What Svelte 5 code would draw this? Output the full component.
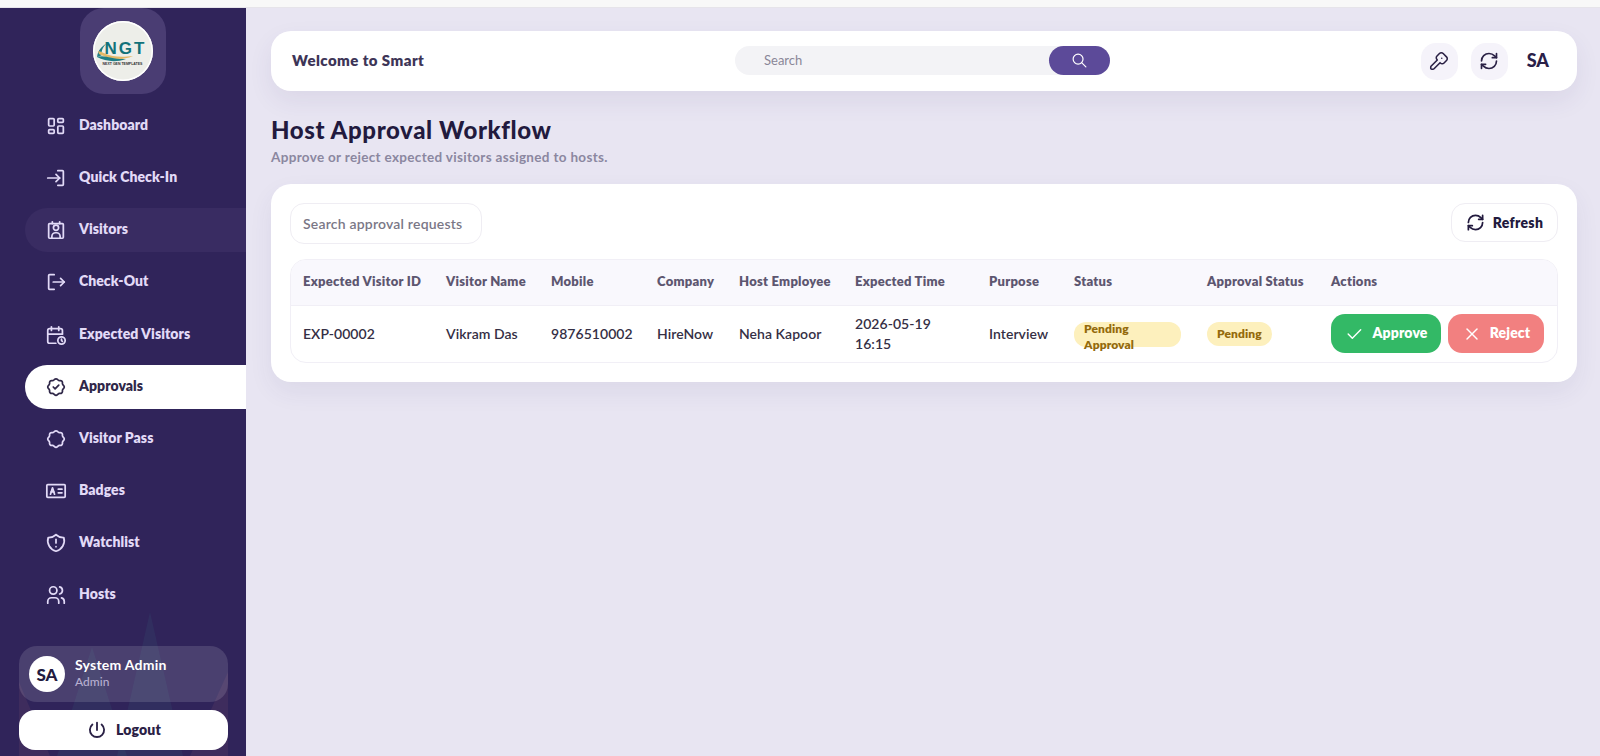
<script>
  const icons = {
    dashboard: ['M5 4h4a1 1 0 0 1 1 1v6a1 1 0 0 1 -1 1h-4a1 1 0 0 1 -1 -1v-6a1 1 0 0 1 1 -1', 'M5 16h4a1 1 0 0 1 1 1v2a1 1 0 0 1 -1 1h-4a1 1 0 0 1 -1 -1v-2a1 1 0 0 1 1 -1', 'M15 12h4a1 1 0 0 1 1 1v6a1 1 0 0 1 -1 1h-4a1 1 0 0 1 -1 -1v-6a1 1 0 0 1 1 -1', 'M15 4h4a1 1 0 0 1 1 1v2a1 1 0 0 1 -1 1h-4a1 1 0 0 1 -1 -1v-2a1 1 0 0 1 1 -1'],
    login: ['M3 12h13', 'M12 8l4 4l-4 4', 'M14 4h5a1 1 0 0 1 1 1v14a1 1 0 0 1 -1 1h-5'],
    visitor: ['M5 5h14a1 1 0 0 1 1 1v14a1 1 0 0 1 -1 1h-14a1 1 0 0 1 -1 -1v-14a1 1 0 0 1 1 -1', 'M8 5v-2', 'M16 5v-2', 'M12 9.5m-2.8 0a2.8 2.8 0 1 0 5.6 0a2.8 2.8 0 1 0 -5.6 0', 'M7.5 21v-2a4 4 0 0 1 4 -4h1a4 4 0 0 1 4 4v2'],
    checkout: ['M10 4h-5a1 1 0 0 0 -1 1v14a1 1 0 0 0 1 1h5', 'M9 12h12', 'M17 8l4 4l-4 4'],
    calendar: ['M11.795 21h-6.795a2 2 0 0 1 -2 -2v-12a2 2 0 0 1 2 -2h12a2 2 0 0 1 2 2v4', 'M18 18m-4 0a4 4 0 1 0 8 0a4 4 0 1 0 -8 0', 'M15 3v4', 'M7 3v4', 'M3 11h16', 'M18 16.496v1.504l1 1'],
    approve: ['M5 7.2a2.2 2.2 0 0 1 2.2 -2.2h1a2.2 2.2 0 0 0 1.55 -.64l.7 -.7a2.2 2.2 0 0 1 3.12 0l.7 .7c.412 .41 .97 .64 1.55 .64h1a2.2 2.2 0 0 1 2.2 2.2v1c0 .58 .23 1.138 .64 1.55l.7 .7a2.2 2.2 0 0 1 0 3.12l-.7 .7a2.2 2.2 0 0 0 -.64 1.55v1a2.2 2.2 0 0 1 -2.2 2.2h-1a2.2 2.2 0 0 0 -1.55 .64l-.7 .7a2.2 2.2 0 0 1 -3.12 0l-.7 -.7a2.2 2.2 0 0 0 -1.55 -.64h-1a2.2 2.2 0 0 1 -2.2 -2.2v-1a2.2 2.2 0 0 0 -.64 -1.55l-.7 -.7a2.2 2.2 0 0 1 0 -3.12l.7 -.7a2.2 2.2 0 0 0 .64 -1.55v-1', 'M9 12l2 2l4 -4'],
    pass: ['M5 7.2a2.2 2.2 0 0 1 2.2 -2.2h1a2.2 2.2 0 0 0 1.55 -.64l.7 -.7a2.2 2.2 0 0 1 3.12 0l.7 .7c.412 .41 .97 .64 1.55 .64h1a2.2 2.2 0 0 1 2.2 2.2v1c0 .58 .23 1.138 .64 1.55l.7 .7a2.2 2.2 0 0 1 0 3.12l-.7 .7a2.2 2.2 0 0 0 -.64 1.55v1a2.2 2.2 0 0 1 -2.2 2.2h-1a2.2 2.2 0 0 0 -1.55 .64l-.7 .7a2.2 2.2 0 0 1 -3.12 0l-.7 -.7a2.2 2.2 0 0 0 -1.55 -.64h-1a2.2 2.2 0 0 1 -2.2 -2.2v-1a2.2 2.2 0 0 0 -.64 -1.55l-.7 -.7a2.2 2.2 0 0 1 0 -3.12l.7 -.7a2.2 2.2 0 0 0 .64 -1.55v-1'],
    badge: ['M3 5h18a1 1 0 0 1 1 1v12a1 1 0 0 1 -1 1h-18a1 1 0 0 1 -1 -1v-12a1 1 0 0 1 1 -1', 'M6 15.5l2.2 -7l2.2 7', 'M6.8 13h2.8', 'M14.5 10h4', 'M14.5 14h4'],
    shield: ['M12 3a12 12 0 0 0 8.5 3a12 12 0 0 1 -8.5 15a12 12 0 0 1 -8.5 -15a12 12 0 0 0 8.5 -3', 'M12 8v4', 'M12 16v.01'],
    hosts: ['M9 7m-4 0a4 4 0 1 0 8 0a4 4 0 1 0 -8 0', 'M3 21v-2a4 4 0 0 1 4 -4h4a4 4 0 0 1 4 4v2', 'M16 3.13a4 4 0 0 1 0 7.75', 'M21 21v-2a4 4 0 0 0 -3 -3.85'],
    power: ['M7 6a7.75 7.75 0 1 0 10 0', 'M12 4v8'],
    search: ['M10 10m-7 0a7 7 0 1 0 14 0a7 7 0 1 0 -14 0', 'M21 21l-6 -6'],
    key: ['M16.555 3.843l3.602 3.602a2.877 2.877 0 0 1 0 4.069l-2.643 2.643a2.877 2.877 0 0 1 -4.069 0l-.301 -.301l-6.558 6.558a2 2 0 0 1 -1.239 .578l-.175 .008h-1.172a1 1 0 0 1 -.993 -.883l-.007 -.117v-1.172a2 2 0 0 1 .467 -1.284l.119 -.13l6.558 -6.558l-.301 -.301a2.877 2.877 0 0 1 0 -4.069l2.643 -2.643a2.877 2.877 0 0 1 4.069 0', 'M15 9h.01'],
    refresh: ['M3 12a9 9 0 0 1 9 -9a9.75 9.75 0 0 1 6.74 2.74l2.26 2.26', 'M21 3v5h-5', 'M21 12a9 9 0 0 1 -9 9a9.75 9.75 0 0 1 -6.74 -2.74l-2.26 -2.26', 'M8 16h-5v5'],
    check: ['M5 12l5 5l10 -10'],
    x: ['M18 6l-12 12', 'M6 6l12 12']
  };

  const nav = [
    ['Dashboard', 'dashboard'],
    ['Quick Check-In', 'login'],
    ['Visitors', 'visitor'],
    ['Check-Out', 'checkout'],
    ['Expected Visitors', 'calendar'],
    ['Approvals', 'approve'],
    ['Visitor Pass', 'pass'],
    ['Badges', 'badge'],
    ['Watchlist', 'shield'],
    ['Hosts', 'hosts']
  ];

  const columns = ['Expected Visitor ID', 'Visitor Name', 'Mobile', 'Company', 'Host Employee', 'Expected Time', 'Purpose', 'Status', 'Approval Status', 'Actions'];
  const widths = [143, 105, 106, 82, 116, 134, 85, 133, 124];
</script>

{#snippet icon(name, size = 20, width = 1.9)}
  <svg class="icon" viewBox="0 0 24 24" style="width:{size}px;height:{size}px" fill="none" stroke="currentColor" stroke-width={width} stroke-linecap="round" stroke-linejoin="round" aria-hidden="true">
    {#each icons[name] as d}<path {d} />{/each}
  </svg>
{/snippet}

<div class="strip"></div>
<div class="shell">
  <aside class="sidebar">
    <svg class="peaks" viewBox="0 0 246 156" aria-hidden="true">
      <path d="M150 12 L183 156 L117 156 Z" fill="#3fa0a0" opacity="0.08" />
      <path d="M92 47 L127 156 L57 156 Z" fill="#3fa0a0" opacity="0.08" />
      <path d="M19 82 L50 156 L19 156 Z" fill="#e08a8a" opacity="0.08" />
      <path d="M228 72 L190 156 L228 156 Z" fill="#e08a8a" opacity="0.08" />
    </svg>

    <div class="logo-box">
      <div class="logo">
        <svg viewBox="0 0 60 60" aria-hidden="true">
          <path d="M4 36 C5 29 9 25 13 23 C9 27 8 31 9 34 C7 35 5 36 4 36 Z" fill="#1f7f86" />
          <path d="M5 30 C12 31 16 38 40 35 C26 41 14 37 6 33 Z" fill="#e3b969" />
          <path d="M4 36 C12 33 20 39 33 38 C22 42 12 40 4 36 Z" fill="#1f7f86" />
        </svg>
        <span class="logo-name">NGT</span>
        <span class="logo-sub">NEXT GEN TEMPLATES</span>
      </div>
    </div>

    <nav class="nav">
      {#each nav as [label, name]}
        <a class="nav-item" class:hover={label === 'Visitors'} class:active={label === 'Approvals'} href="#top">
          {@render icon(name, 22, 1.9)}
          <span>{label}</span>
        </a>
      {/each}
    </nav>

    <div class="side-foot">
      <div class="profile">
        <div class="avatar">SA</div>
        <div class="profile-text">
          <div class="profile-name">System Admin</div>
          <div class="profile-role">Admin</div>
        </div>
      </div>
      <button class="logout">
        {@render icon('power', 22, 2)}
        <span>Logout</span>
      </button>
    </div>
  </aside>

  <main class="main">
    <header class="topbar">
      <div class="welcome">Welcome to Smart</div>
      <div class="top-search">
        <span class="top-search-text">Search</span>
        <button class="top-search-btn" aria-label="Search">{@render icon('search', 17, 1.7)}</button>
      </div>
      <div class="top-actions">
        <button class="icon-btn" aria-label="Change password">{@render icon('key', 22, 1.7)}</button>
        <button class="icon-btn" aria-label="Reload">{@render icon('refresh', 20, 2)}</button>
        <span class="initials">SA</span>
      </div>
    </header>

    <h1>Host Approval Workflow</h1>
    <p class="subtitle">Approve or reject expected visitors assigned to hosts.</p>

    <section class="card">
      <div class="toolbar">
        <div class="filter">Search approval requests</div>
        <button class="refresh">{@render icon('refresh', 19, 2.2)}<span>Refresh</span></button>
      </div>

      <div class="table-wrap">
        <table>
          <colgroup>
            {#each widths as w}<col style="width:{w}px" />{/each}
            <col />
          </colgroup>
          <thead>
            <tr>{#each columns as c}<th>{c}</th>{/each}</tr>
          </thead>
          <tbody>
            <tr>
              <td>EXP-00002</td>
              <td>Vikram Das</td>
              <td>9876510002</td>
              <td>HireNow</td>
              <td>Neha Kapoor</td>
              <td>2026-05-19<br />16:15</td>
              <td>Interview</td>
              <td><span class="pill wide">Pending Approval</span></td>
              <td><span class="pill">Pending</span></td>
              <td>
                <div class="actions">
                  <button class="act approve">{@render icon('check', 20, 1.7)}<span>Approve</span></button>
                  <button class="act reject">{@render icon('x', 20, 1.7)}<span>Reject</span></button>
                </div>
              </td>
            </tr>
          </tbody>
        </table>
      </div>
    </section>
  </main>
</div>

<style>
  :global(body) {
    margin: 0;
    height: 756px;
    overflow: hidden;
    background: #e8e5f2;
    font-family: Lato, "Noto Sans", sans-serif;
  }
  .strip {
    height: 7px;
    background: #f8f8f8;
    border-bottom: 1px solid #e6e4ea;
  }
  .shell {
    display: flex;
    height: 748px;
  }
  .icon {
    flex: none;
    display: block;
  }
  button {
    font-family: inherit;
    border: 0;
    cursor: pointer;
  }

  .sidebar {
    position: relative;
    width: 246px;
    flex: none;
    display: flex;
    flex-direction: column;
    background: #30245a;
    overflow: hidden;
  }
  .peaks {
    position: absolute;
    left: 0;
    bottom: 0;
    width: 246px;
    height: 156px;
  }
  .logo-box {
    align-self: center;
    width: 86px;
    height: 86px;
    margin-left: -1px;
    flex: none;
    display: grid;
    place-items: center;
    border-radius: 24px;
    background: #4a3d73;
  }
  .logo {
    position: relative;
    width: 60px;
    height: 60px;
    border-radius: 50%;
    background: #edeee9;
    box-shadow: inset 0 0 0 1.5px #fff;
    overflow: hidden;
  }
  .logo svg {
    position: absolute;
    inset: 0;
  }
  .logo-name {
    position: absolute;
    left: 12px;
    top: 18px;
    color: #12727a;
    font: 900 17px/20px "Liberation Sans", sans-serif;
    letter-spacing: 2px;
  }
  .logo-sub {
    position: absolute;
    left: 0;
    right: 0;
    top: 41px;
    text-align: center;
    color: #333;
    font: 700 3.5px/5px "Liberation Sans", sans-serif;
    white-space: nowrap;
  }

  .nav {
    position: relative;
    margin-top: 10px;
    display: flex;
    flex-direction: column;
    gap: 8.15px;
    padding-left: 25px;
  }
  .nav-item {
    height: 44px;
    display: flex;
    align-items: center;
    gap: 12px;
    padding-left: 20px;
    border-radius: 22px 0 0 22px;
    color: #e2daf7;
    font-size: 14px;
    font-weight: 800;
    letter-spacing: 0.05px;
    text-decoration: none;
  }
  .nav-item span {
    padding-bottom: 3px;
  }
  .nav-item.hover {
    background: #392c62;
  }
  .nav-item.active {
    background: #fff;
    color: #2f2748;
  }

  .side-foot {
    position: relative;
    margin-top: auto;
    padding: 0 18px 6px 19px;
    display: flex;
    flex-direction: column;
    gap: 8px;
  }
  .profile {
    height: 56px;
    display: flex;
    align-items: center;
    gap: 10px;
    padding-left: 10px;
    border-radius: 18px;
    background: rgba(255, 255, 255, 0.13);
  }
  .avatar {
    width: 36px;
    height: 36px;
    display: grid;
    place-items: center;
    border-radius: 50%;
    background: #fff;
    color: #221a40;
    font-size: 17px;
    font-weight: 900;
  }
  .profile-text {
    padding-bottom: 3px;
  }
  .profile-name {
    color: #fff;
    font-size: 14px;
    font-weight: 700;
    letter-spacing: 0.25px;
    line-height: 19px;
  }
  .profile-role {
    color: #b6aed0;
    font-size: 12px;
    font-weight: 500;
    line-height: 16px;
  }
  .logout {
    height: 40px;
    display: flex;
    align-items: center;
    justify-content: center;
    gap: 8px;
    border-radius: 16px;
    background: #fff;
    color: #2a2145;
    font-size: 14px;
    font-weight: 800;
    letter-spacing: 0.2px;
  }
  .logout span {
    padding-bottom: 2px;
  }

  .main {
    flex: 1;
    min-width: 0;
    padding: 23px 23px 0 25px;
  }
  .topbar {
    position: relative;
    height: 60px;
    display: flex;
    align-items: center;
    padding: 0 28px 0 21px;
    border-radius: 20px;
    background: #fff;
    box-shadow: 0 10px 24px rgba(60, 50, 110, 0.08);
  }
  .welcome {
    padding-bottom: 2px;
    color: #3d3557;
    font-size: 15px;
    font-weight: 800;
    letter-spacing: 0.44px;
  }
  .top-search {
    position: absolute;
    left: 464px;
    top: 15px;
    width: 375px;
    height: 29px;
    display: flex;
    align-items: center;
    justify-content: space-between;
    border-radius: 15px;
    background: #f3f3f6;
  }
  .top-search-text {
    padding: 0 0 2px 29px;
    color: #8a8798;
    font-size: 13px;
  }
  .top-search-btn {
    width: 61px;
    height: 29px;
    padding: 0;
    display: grid;
    place-items: center;
    border-radius: 15px;
    background: #5c4a99;
    color: #fff;
  }
  .top-actions {
    margin-left: auto;
    display: flex;
    align-items: center;
    gap: 13px;
  }
  .icon-btn {
    width: 37px;
    height: 37px;
    padding: 0;
    display: grid;
    place-items: center;
    border-radius: 15px;
    background: #f5f3fa;
    color: #2a2145;
  }
  .initials {
    margin-left: 6px;
    padding-bottom: 2px;
    color: #2a2048;
    font-size: 18px;
    font-weight: 900;
  }

  h1 {
    margin: 24px 0 0;
    color: #221a3e;
    font-size: 24px;
    font-weight: 900;
    letter-spacing: 0.6px;
    line-height: 30px;
  }
  .subtitle {
    margin: 3px 0 0;
    color: #8b87a0;
    font-size: 13.5px;
    font-weight: 700;
    letter-spacing: 0.32px;
    line-height: 18px;
  }

  .card {
    margin-top: 18px;
    padding: 19px;
    border-radius: 20px;
    background: #fff;
    box-shadow: 0 10px 24px rgba(60, 50, 110, 0.07);
  }
  .toolbar {
    display: flex;
    justify-content: space-between;
    align-items: flex-start;
  }
  .filter {
    width: 192px;
    height: 41px;
    box-sizing: border-box;
    display: flex;
    align-items: center;
    padding-left: 12px;
    border: 1px solid #efedf3;
    border-radius: 14px;
    color: #7a7786;
    font-size: 14px;
    font-weight: 600;
    letter-spacing: 0.2px;
  }
  .refresh {
    width: 107px;
    height: 39px;
    padding: 0;
    display: flex;
    align-items: center;
    justify-content: center;
    gap: 8px;
    border: 1px solid #efedf3;
    border-radius: 14px;
    background: #fff;
    color: #221a3e;
    font-size: 14px;
    font-weight: 800;
    letter-spacing: 0.3px;
  }

  .table-wrap {
    margin-top: 15px;
    border: 1px solid #f1eff6;
    border-radius: 16px;
    overflow: hidden;
  }
  table {
    width: 100%;
    table-layout: fixed;
    border-collapse: collapse;
  }
  th {
    height: 45px;
    padding: 0 0 2px 12px;
    box-sizing: border-box;
    background: #f9f8fd;
    border-bottom: 1px solid #f1eff6;
    color: #5d5670;
    font-size: 13px;
    font-weight: 800;
    letter-spacing: 0.25px;
    text-align: left;
    white-space: nowrap;
  }
  td {
    height: 57px;
    padding: 0 0 0 12px;
    box-sizing: border-box;
    color: #352f45;
    font-size: 14px;
    font-weight: 600;
    letter-spacing: 0.05px;
    line-height: 19.5px;
  }
  .pill {
    display: inline-flex;
    align-items: center;
    height: 24px;
    padding: 0 10px;
    border-radius: 12px;
    background: #fdf0bd;
    color: #946a0c;
    font-size: 12px;
    font-weight: 800;
    letter-spacing: 0.1px;
    line-height: 16px;
    vertical-align: middle;
  }
  .pill.wide {
    width: 107px;
    height: 25px;
    padding-top: 4px;
    box-sizing: border-box;
    position: relative;
    top: 1px;
  }
  .actions {
    display: flex;
    gap: 7px;
  }
  .act {
    height: 39px;
    padding: 0;
    display: flex;
    align-items: center;
    justify-content: center;
    gap: 8px;
    border-radius: 14px;
    color: #fff;
    font-size: 14px;
    font-weight: 800;
    letter-spacing: 0.15px;
  }
  .act span {
    padding-bottom: 2px;
  }
  .approve {
    width: 110px;
    background: #33b966;
  }
  .reject {
    width: 96px;
    background: #f28080;
  }
</style>
